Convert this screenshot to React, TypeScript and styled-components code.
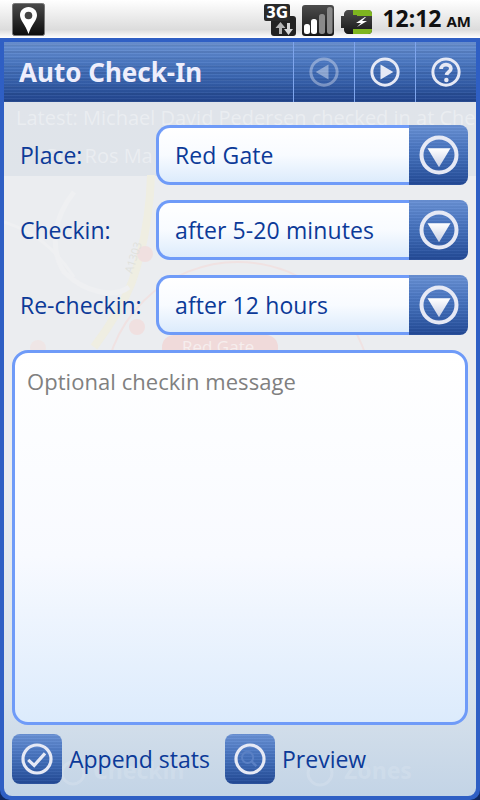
import React from "react";
import styled, { createGlobalStyle } from "styled-components";

const GlobalStyle = createGlobalStyle`
  html, body {
    margin: 0;
    padding: 0;
    background: #10285f;
  }
  * {
    box-sizing: border-box;
  }
`;

const Screen = styled.div`
  width: 480px;
  height: 800px;
  display: flex;
  flex-direction: column;
  overflow: hidden;
  background: #10285f;
  font-family: "Open Sans", "Noto Sans", sans-serif;
`;

const StatusBar = styled.div`
  height: 38px;
  flex: none;
  display: flex;
  align-items: center;
  padding: 0 9px 0 12px;
  background: linear-gradient(#ffffff 0%, #f4f4f4 25%, #dcdcdc 78%, #f2f2f2 92%, #ffffff 100%);
`;

const StatusRight = styled.div`
  margin-left: auto;
  display: flex;
  align-items: center;
`;

const Clock = styled.div`
  margin-left: 9px;
  font-size: 23px;
  font-weight: 700;
  color: #111;
  font-family: "Noto Sans", sans-serif;
  margin-top: -2px;
  small {
    font-size: 15px;
    margin-left: 5px;
  }
`;

const Frame = styled.div`
  flex: 1;
  display: flex;
  flex-direction: column;
  background: #2f5fc4;
  padding: 4px;
  min-height: 0;
  border-radius: 0 0 10px 10px;
`;

const Header = styled.div`
  height: 60px;
  flex: none;
  display: flex;
  background:
    repeating-linear-gradient(0deg, rgba(255, 255, 255, 0.05) 0 1px, rgba(0, 0, 0, 0.04) 1px 3px),
    repeating-linear-gradient(0deg, rgba(0, 0, 0, 0.05) 0 2px, transparent 2px 7px),
    linear-gradient(#6a92d4 0%, #4f7cc6 30%, #3a66b2 60%, #21458f 100%);
`;

const Title = styled.div`
  flex: 1;
  padding-left: 15px;
  line-height: 61px;
  font-size: 26px;
  font-weight: 700;
  color: #eeeefc;
  font-family: "Noto Sans", sans-serif;
`;

const HeadButton = styled.div<{ $off?: boolean }>`
  width: 61px;
  display: flex;
  align-items: center;
  justify-content: center;
  border-left: 1px solid #7fa5ec;
  svg {
    opacity: ${(p) => (p.$off ? 0.4 : 1)};
  }
`;

const Body = styled.div`
  flex: 1;
  position: relative;
  min-height: 0;
  display: flex;
  flex-direction: column;
  padding: 23px 8px 12px 8px;
  border-radius: 0 0 8px 8px;
  overflow: hidden;
  background: linear-gradient(#ebedf0 0%, #ebedf0 55%, #d8e2ec 85%, #c3d4e6 100%);
`;

const GhostLayer = styled.div`
  position: absolute;
  inset: 0;
  overflow: hidden;
  pointer-events: none;
`;

const GhostBand = styled.div`
  position: absolute;
  left: 0;
  right: 0;
  top: 0;
  height: 74px;
  background: linear-gradient(#e0e4ea, #dfe4ea);
`;

const GhostLine = styled.div<{ $top: number; $left: number }>`
  position: absolute;
  left: ${(p) => p.$left}px;
  top: ${(p) => p.$top}px;
  white-space: nowrap;
  font-size: 20px;
  color: rgba(255, 255, 255, 0.36);
`;

const GhostTab = styled.div<{ $left: number }>`
  position: absolute;
  left: ${(p) => p.$left}px;
  top: 652px;
  font-size: 23px;
  font-weight: 700;
  color: rgba(255, 255, 255, 0.14);
  font-family: "Noto Sans", sans-serif;
`;

const Row = styled.div`
  position: relative;
  height: 60px;
  margin-bottom: 15px;
  display: flex;
  align-items: center;
`;

const Label = styled.div`
  width: 144px;
  padding-left: 8px;
  font-size: 23px;
  color: #0c3a98;
`;

const Select = styled.div`
  flex: 1;
  height: 60px;
  display: flex;
`;

const SelectValue = styled.div`
  flex: 1;
  display: flex;
  align-items: center;
  padding: 0 0 0 16px;
  border: 3px solid #6f9bf8;
  border-right: none;
  border-radius: 14px 0 0 14px;
  font-size: 23px;
  letter-spacing: 0.1px;
  color: #0c3a98;
  background: linear-gradient(#ffffff 0%, #f8fbff 50%, #dcebfc 100%);
`;

const blueButton = `
  background:
    repeating-linear-gradient(0deg, rgba(255, 255, 255, 0.04) 0 1px, rgba(0, 0, 0, 0.04) 1px 3px),
    linear-gradient(#6a92d6 0%, #4d79c4 35%, #3a66b2 65%, #234a97 100%);
`;

const SelectButton = styled.div`
  width: 59px;
  display: flex;
  align-items: center;
  justify-content: center;
  border-radius: 0 8px 8px 0;
  ${blueButton}
`;

const Message = styled.div`
  position: relative;
  flex: 1;
  margin-bottom: 9px;
  padding: 13px 12px;
  border: 3px solid #6f9bf8;
  border-radius: 16px;
  font-size: 22px;
  letter-spacing: 0.05px;
  color: #808080;
  background: linear-gradient(#ffffff 0%, #f8faff 55%, #dcebfc 100%);
`;

const Footer = styled.div`
  position: relative;
  height: 50px;
  flex: none;
  display: flex;
  align-items: center;
`;

const FooterAction = styled.div`
  display: flex;
  align-items: center;
  width: 213px;
`;

const SquareButton = styled.div`
  width: 50px;
  height: 50px;
  display: flex;
  align-items: center;
  justify-content: center;
  border-radius: 8px;
  ${blueButton}
`;

const FooterLabel = styled.div`
  margin-left: 7px;
  margin-top: -1px;
  font-size: 23px;
  color: #0c3a98;
`;

const PinIcon = () => (
  <svg width="33" height="33" viewBox="0 0 33 33">
    <defs>
      <linearGradient id="pinbg" x1="0" y1="0" x2="0" y2="1">
        <stop offset="0" stopColor="#4a4a4a" />
        <stop offset="1" stopColor="#0c0c0c" />
      </linearGradient>
    </defs>
    <rect x="0.5" y="0.5" width="32" height="32" rx="2" fill="url(#pinbg)" stroke="#777" />
    <path
      d="M16.5 4c-5 0-8.5 3.6-8.5 8.3 0 5 5.5 9.5 8.500 18.700 3-9.200 8.500-13.700 8.500-18.700C25 7.600 21.500 4 16.500 4z"
      fill="#fff"
    />
    <circle cx="16.500" cy="12.500" r="3.800" fill="#444" />
  </svg>
);

const SignalIcons = () => (
  <svg width="110" height="34" viewBox="0 0 110 34">
    <defs>
      <linearGradient id="darkbox" x1="0" y1="0" x2="0" y2="1">
        <stop offset="0" stopColor="#4c4c4c" />
        <stop offset="1" stopColor="#161616" />
      </linearGradient>
    </defs>
    <rect x="8" y="14" width="25" height="20" rx="3" fill="#222" />
    <rect x="1" y="2" width="26" height="17" rx="2" fill="#2a2a2a" />
    <text x="3" y="16" fontSize="15" fontWeight="700" fill="#fff" textLength="22" lengthAdjust="spacingAndGlyphs" fontFamily="'DejaVu Sans', sans-serif">
      3G
    </text>
    <path d="M16 32v-6h-3.500l5-6 5 6H19v6z" fill="#b4b4b4" />
    <path d="M24 21v6h-3l4.500 6 4.500-6h-3v-6z" fill="#d6d6d6" />
    <rect x="39" y="3" width="32" height="31" rx="3" fill="url(#darkbox)" />
    <rect x="41" y="22" width="6" height="10" rx="2.500" fill="#fff" />
    <rect x="48" y="17" width="6" height="15" rx="2.500" fill="#fff" />
    <rect x="56" y="12" width="6" height="20" rx="2.500" fill="#8a8a8a" />
    <rect x="64" y="5" width="5.500" height="27" rx="2.500" fill="#8a8a8a" />
    <path d="M78 14h3v-2c0-2 2-4 4-4h20a4 4 0 014 4v16a4 4 0 01-4 4H85c-2 0-4-2-4-4v-2h-3z" fill="url(#darkbox)" />
    <path d="M90 8h15a4 4 0 014 4v2H94v-1h-4zM90 27h19v1a4 4 0 01-4 4H90z" fill="#7eb51f" />
    <path d="M102 15l-9 6h5l-4 4 10-6h-5l4-4z" fill="#fff" />
  </svg>
);

const RingIcon = ({ size, children }: { size: number; children?: React.ReactNode }) => (
  <svg width={size} height={size} viewBox="0 0 40 40">
    <circle cx="20" cy="20" r="17.500" fill="none" stroke="#e6e9f5" strokeWidth="4" />
    {children}
  </svg>
);

const Chevron = () => (
  <RingIcon size={40}>
    <path d="M8.500 13.300h23L20 32.300z" fill="url(#tri)" />
    <defs>
      <linearGradient id="tri" x1="0" y1="0" x2="0" y2="1">
        <stop offset="0" stopColor="#ffffff" />
        <stop offset="1" stopColor="#c8d0e4" />
      </linearGradient>
    </defs>
  </RingIcon>
);

const GhostMap = () => (
  <svg width="472" height="694" viewBox="0 0 472 694" style={{ position: "absolute", left: 0, top: 0 }}>
    <path d="M147 73C146 110 140 145 128 180C118 205 105 225 90 245" fill="none" stroke="#efeee2" strokeWidth="8" />
    <path d="M70 90C50 115 45 145 60 170C80 190 110 197 125 185" fill="none" stroke="#eff0f2" strokeWidth="5" />
    <path d="M0 120C30 130 50 145 70 175" fill="none" stroke="#eff0f2" strokeWidth="3" />
    <circle cx="234" cy="294" r="134" fill="none" stroke="#f0e2e2" strokeWidth="2" />
    <circle cx="141" cy="152" r="8" fill="#f0e0e0" />
    <circle cx="133" cy="225" r="8" fill="#f0e0e0" />
    <circle cx="34" cy="246" r="8" fill="#efe6e6" />
    <rect x="158" y="233" width="116" height="26" rx="12" fill="#f0dada" />
    <text x="178" y="251" fontSize="17" fontFamily="'Open Sans', sans-serif" fill="#f6eeee">
      Red Gate
    </text>
    <text
      x="128"
      y="172"
      fontSize="11"
      fontFamily="'Open Sans', sans-serif"
      fill="#e0e1dc"
      transform="rotate(-72 128 172)"
    >
      A1303
    </text>
    <circle cx="69" cy="671" r="11" fill="none" stroke="#ffffff" strokeOpacity="0.14" strokeWidth="3" />
    <circle cx="316" cy="671" r="12" fill="none" stroke="#ffffff" strokeOpacity="0.14" strokeWidth="3" />
  </svg>
);

const rows = [
  { label: "Place:", value: "Red Gate" },
  { label: "Checkin:", value: "after 5-20 minutes" },
  { label: "Re-checkin:", value: "after 12 hours" },
];

const App: React.FC = () => {
  return (
    <Screen>
      <GlobalStyle />
      <StatusBar>
        <PinIcon />
        <StatusRight>
          <SignalIcons />
          <Clock>
            12:12<small>AM</small>
          </Clock>
        </StatusRight>
      </StatusBar>
      <Frame>
        <Header>
          <Title>Auto Check-In</Title>
          <HeadButton $off>
            <RingIcon size={30}>
              <path d="M9 20l17-10v20z" fill="#fff" />
            </RingIcon>
          </HeadButton>
          <HeadButton>
            <RingIcon size={30}>
              <path d="M31 20L14 10v20z" fill="#e6e9f5" />
            </RingIcon>
          </HeadButton>
          <HeadButton>
            <RingIcon size={30}>
              <path
                d="M13.500 16c0-3.500 2.600-5.800 6.500-5.800s6.500 2.200 6.500 5.300c0 4-5.500 4.500-5.800 8.500"
                fill="none"
                stroke="#e6e9f5"
                strokeWidth="5"
              />
              <circle cx="20.500" cy="30.500" r="3" fill="#e6e9f5" />
            </RingIcon>
          </HeadButton>
        </Header>
        <Body>
          <GhostLayer>
            <GhostBand />
            <GhostMap />
            <GhostLine $top={2} $left={12}>Latest: Michael David Pedersen checked in at Chef</GhostLine>
            <GhostLine $top={40} $left={39}>Gus Ros Ma</GhostLine>
            <GhostTab $left={89}>Checkin</GhostTab>
            <GhostTab $left={340}>Zones</GhostTab>
          </GhostLayer>
          {rows.map((r) => (
            <Row key={r.label}>
              <Label>{r.label}</Label>
              <Select>
                <SelectValue>{r.value}</SelectValue>
                <SelectButton>
                  <Chevron />
                </SelectButton>
              </Select>
            </Row>
          ))}
          <Message>Optional checkin message</Message>
          <Footer>
            <FooterAction>
              <SquareButton>
                <RingIcon size={32}>
                  <path d="M9 21l7.500 7L30 13" fill="none" stroke="#e6e9f5" strokeWidth="4" />
                </RingIcon>
              </SquareButton>
              <FooterLabel>Append stats</FooterLabel>
            </FooterAction>
            <FooterAction>
              <SquareButton>
                <RingIcon size={32}>
                  <circle cx="17" cy="18" r="7" fill="none" stroke="#5a80c4" strokeWidth="2.500" />
                  <path d="M22 23l6 6" stroke="#5a80c4" strokeWidth="3" />
                </RingIcon>
              </SquareButton>
              <FooterLabel>Preview</FooterLabel>
            </FooterAction>
          </Footer>
        </Body>
      </Frame>
    </Screen>
  );
};

export default App;
